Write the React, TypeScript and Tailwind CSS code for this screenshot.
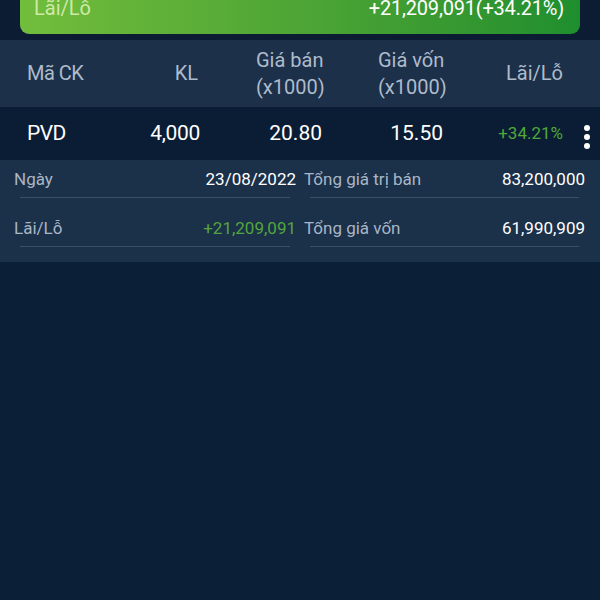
export default function App() {
  return (
    <div className="w-[600px] h-[600px] bg-[#0b1f36] overflow-hidden font-['Roboto',sans-serif]">
      {/* Summary banner */}
      <div className="px-5 bg-[#0c1d33] pb-[6px]">
        <div className="h-[40px] rounded-b-[9px] bg-gradient-to-r from-[#72bd3c] to-[#1e8e2e] flex items-end justify-between pl-[14px] pr-[16px] pb-[16px] -mt-[6px]">
          <span className="text-[20px] leading-none text-[#cfe9a8]">Lãi/Lỗ</span>
          <span className="text-[20px] leading-none text-white tracking-[-0.2px]">+21,209,091(+34.21%)</span>
        </div>
      </div>

      {/* Table header */}
      <div className="h-[67px] bg-[#1c3049] flex items-center text-[20px] leading-[27px] text-[#aebbcb]">
        <div className="w-[140px] pl-[27px] tracking-[-0.5px]">Mã CK</div>
        <div className="w-[60px] text-right pr-[2px]">KL</div>
        <div className="w-[122px] text-center pl-[56px] whitespace-nowrap">Giá bán<br />(x1000)</div>
        <div className="w-[122px] text-center pl-[56px] whitespace-nowrap">Giá vốn<br />(x1000)</div>
        <div className="flex-1 text-right pr-[37px]">Lãi/Lỗ</div>
      </div>

      {/* Data row */}
      <div className="h-[53px] bg-[#0a1d34] flex items-center text-[21px] text-white relative">
        <div className="w-[140px] pl-[27px] tracking-[-0.5px]">PVD</div>
        <div className="w-[60px] text-right tracking-[-0.3px]">4,000</div>
        <div className="w-[122px] text-right">20.80</div>
        <div className="w-[121px] text-right">15.50</div>
        <div className="flex-1 text-right pr-[37px] text-[17px] text-[#4fa83a]">+34.21%</div>
        <div className="absolute right-[10px] top-[18px] flex flex-col gap-[3px]">
          <span className="w-[6px] h-[6px] rounded-full bg-white" />
          <span className="w-[6px] h-[6px] rounded-full bg-white" />
          <span className="w-[6px] h-[6px] rounded-full bg-white" />
        </div>
      </div>

      {/* Detail panel */}
      <div className="bg-[#1b3049] pb-[15px] pl-[14px] pr-[15px] text-[17px]">
        <div className="grid grid-cols-[282px_1fr] gap-x-[8px] gap-y-[11px]">
          <DetailCell label="Ngày" value="23/08/2022" />
          <DetailCell label="Tổng giá trị bán" value="83,200,000" />
          <DetailCell label="Lãi/Lỗ" value="+21,209,091" green />
          <DetailCell label="Tổng giá vốn" value="61,990,909" />
        </div>
      </div>
    </div>
  )
}

function DetailCell({ label, value, green }: { label: string; value: string; green?: boolean }) {
  return (
    <div className="flex flex-col">
      <div className="flex justify-between items-center h-[37px] pt-[3px]">
        <span className="text-[#a9b6c6]">{label}</span>
        <span className={green ? "text-[#53a63c]" : "text-white"}>{value}</span>
      </div>
      <div className="h-px bg-[#3a4f68] mx-[6px]" />
    </div>
  )
}
